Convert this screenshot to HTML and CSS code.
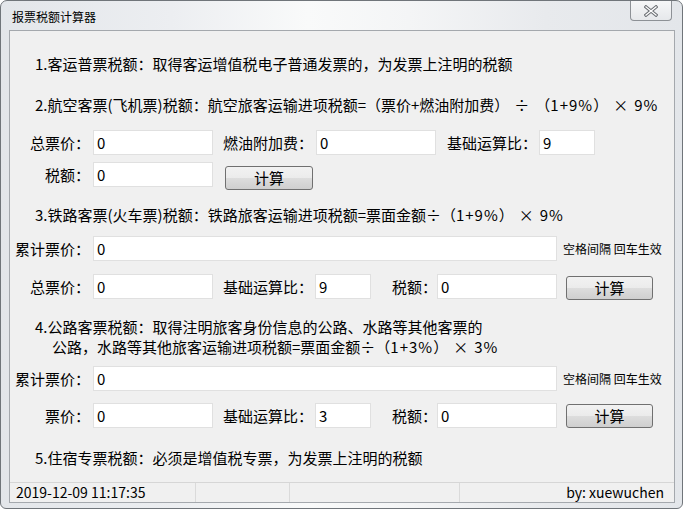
FILE: index.html
```html
<!DOCTYPE html>
<html lang="zh-CN">
<head>
<meta charset="utf-8">
<title>报票税额计算器</title>
<link rel="stylesheet" href="styles.css">
</head>
<body>
<div class="window">
  <div class="titlebar">
    <span class="title">报票税额计算器</span>
    <div class="close">
      <svg width="14" height="12" viewBox="0 0 14 12">
        <path d="M2 2 L12 10 M12 2 L2 10" stroke="#6a6e73" stroke-width="3.4" stroke-linecap="square" fill="none"/>
        <path d="M2 2 L12 10 M12 2 L2 10" stroke="#ffffff" stroke-width="1.3" stroke-linecap="square" fill="none"/>
      </svg>
    </div>
  </div>
  <div class="client">
    <div class="content">
      <p class="line l1">1.客运普票税额：取得客运增值税电子普通发票的，为发票上注明的税额</p>
      <p class="line l2">2.航空客票(飞机票)税额：航空旅客运输进项税额=（票价+燃油附加费）<span class="op">÷</span>（<span class="num">1+9%</span>）<span class="op">×</span><span class="num">9%</span></p>
      <div class="row rowA">
        <span class="lbl w80">总票价：</span><input class="field w120 ml3" value="0">
        <span class="lbl w100">燃油附加费：</span><input class="field w120 ml3" value="0">
        <span class="lbl w101">基础运算比：</span><input class="field w56 ml2" value="9">
      </div>
      <div class="row rowB">
        <span class="lbl w80">税额：</span><input class="field w120 ml3" value="0">
        <button class="btn btnB">计算</button>
      </div>
      <p class="line l3">3.铁路客票(火车票)税额：铁路旅客运输进项税额=票面金额÷（<span class="num">1+9%</span>）<span class="op">×</span><span class="num">9%</span></p>
      <div class="row rowSum1">
        <span class="lbl w80">累计票价：</span><input class="field wide ml3" value="0">
        <span class="hint">空格间隔 回车生效</span>
      </div>
      <div class="row rowC">
        <span class="lbl w80">总票价：</span><input class="field w120 ml3" value="0">
        <span class="lbl w100">基础运算比：</span><input class="field w56 ml2" value="9">
        <span class="lbl w66">税额：</span><input class="field w120" value="0">
        <button class="btn btnC">计算</button>
      </div>
      <p class="line l4">4.公路客票税额：取得注明旅客身份信息的公路、水路等其他客票的</p>
      <p class="line l4b">公路，水路等其他旅客运输进项税额=票面金额÷（<span class="num">1+3%</span>）<span class="op">×</span><span class="num">3%</span></p>
      <div class="row rowSum2">
        <span class="lbl w80">累计票价：</span><input class="field wide ml3" value="0">
        <span class="hint">空格间隔 回车生效</span>
      </div>
      <div class="row rowD">
        <span class="lbl w80">票价：</span><input class="field w120 ml3" value="0">
        <span class="lbl w100">基础运算比：</span><input class="field w56 ml2" value="3">
        <span class="lbl w66">税额：</span><input class="field w120" value="0">
        <button class="btn btnD">计算</button>
      </div>
      <p class="line l5">5.住宿专票税额：必须是增值税专票，为发票上注明的税额</p>
    </div>
    <div class="statusbar">
      <div class="panel p1">2019-12-09 11:17:35</div>
      <div class="panel p2"></div>
      <div class="panel p3"></div>
      <div class="panel p4">by: xuewuchen</div>
    </div>
  </div>
</div>
</body>
</html>
```

FILE: styles.css
```css
* { box-sizing: border-box; }
html, body { margin: 0; padding: 0; }
body {
  width: 683px;
  height: 509px;
  overflow: hidden;
  background: #ffffff;
  font-family: "Noto Sans CJK SC", "Noto Sans", sans-serif;
  color: #000;
}
.window {
  width: 683px;
  height: 509px;
  border: 1px solid #70757a;
  border-radius: 7px 7px 6px 6px;
  background: linear-gradient(to right, #e3e6ea 0%, #eceef1 25%, #f9fafa 45%, #f4f5f6 60%, #e8eaed 80%, #e3e6ea 100%);
  display: flex;
  flex-direction: column;
  padding: 0 7px 5px 8px;
}
.titlebar {
  height: 29px;
  display: flex;
  justify-content: space-between;
  align-items: flex-start;
}
.title {
  font-size: 12px;
  line-height: 14px;
  margin-top: 9px;
  margin-left: 3px;
}
.close {
  width: 42px;
  height: 20px;
  margin-right: 3px;
  border: 1px solid #8d9196;
  border-top: none;
  border-radius: 0 0 4px 4px;
  background: linear-gradient(#f6f7f8, #e6e8eb);
  display: flex;
  align-items: center;
  justify-content: center;
}
.client {
  flex: 1;
  border: 1px solid #a4a8ad;
  background: #f0f0f0;
  display: flex;
  flex-direction: column;
}
.content { flex: 1; }
.line {
  margin: 0;
  font-size: 15px;
  line-height: 20px;
  padding-left: 25px;
  white-space: nowrap;
}
.op { margin: 0 6px 0 5px; }
.num { letter-spacing: 1px; }
.l1 { margin-top: 23px; }
.l2 { margin-top: 21px; }
.l3 { margin-top: 15px; }
.l4 { margin-top: 17px; }
.l4b { padding-left: 42px; }
.l5 { margin-top: 20px; }

.row {
  display: flex;
  align-items: flex-start;
  height: 25px;
}
.rowA { margin-top: 15px; }
.rowB { margin-top: 7px; height: 28px; }
.rowSum1 { margin-top: 11px; }
.rowC { margin-top: 13px; height: 26px; }
.rowSum2 { margin-top: 9px; }
.rowD { margin-top: 12px; }

.lbl {
  font-size: 15px;
  line-height: 25px;
  text-align: right;
  white-space: nowrap;
  flex: none;
}
.w80 { width: 80px; }
.w100 { width: 100px; }
.w101 { width: 101px; }
.w66 { width: 66px; }
.ml2 { margin-left: 2px; }
.ml3 { margin-left: 3px; }

.field {
  flex: none;
  height: 25px;
  border: 1px solid #e0e0e0;
  background: #ffffff;
  font-family: "Noto Sans CJK SC", "Noto Sans", sans-serif;
  font-size: 15px;
  padding: 0 0 0 3px;
  color: #000;
  outline: none;
  margin-top: 0;
  margin-bottom: 0;
  margin-right: 0;
}
.w120 { width: 120px; }
.w56 { width: 56px; }
.wide { width: 464px; }

.hint {
  font-size: 12px;
  line-height: 25px;
  margin-left: 6px;
  white-space: nowrap;
}

.btn {
  flex: none;
  width: 88px;
  height: 24px;
  border: 1px solid #707070;
  border-radius: 3px;
  background: linear-gradient(#f2f2f2 0%, #ebebeb 50%, #dddddd 51%, #cfcfcf 100%);
  font-family: "Noto Sans CJK SC", "Noto Sans", sans-serif;
  font-size: 15px;
  line-height: 20px;
  padding: 0;
  color: #000;
}
.btnB { margin-left: 12px; margin-top: 4px; }
.btnC { margin-left: 9px; margin-top: 2px; width: 87px; }
.btnD { margin-left: 9px; margin-top: 1px; width: 87px; }

.statusbar {
  height: 20px;
  border-top: 1px solid #d6d6d6;
  display: flex;
  font-size: 14px;
  line-height: 19px;
}
.panel {
  border-right: 1px solid #dadada;
  white-space: nowrap;
}
.p1 { width: 186px; padding-left: 6px; }
.p2 { width: 94px; }
.p3 { width: 170px; }
.p4 { flex: 1; border-right: none; text-align: right; padding-right: 10px; }
```
